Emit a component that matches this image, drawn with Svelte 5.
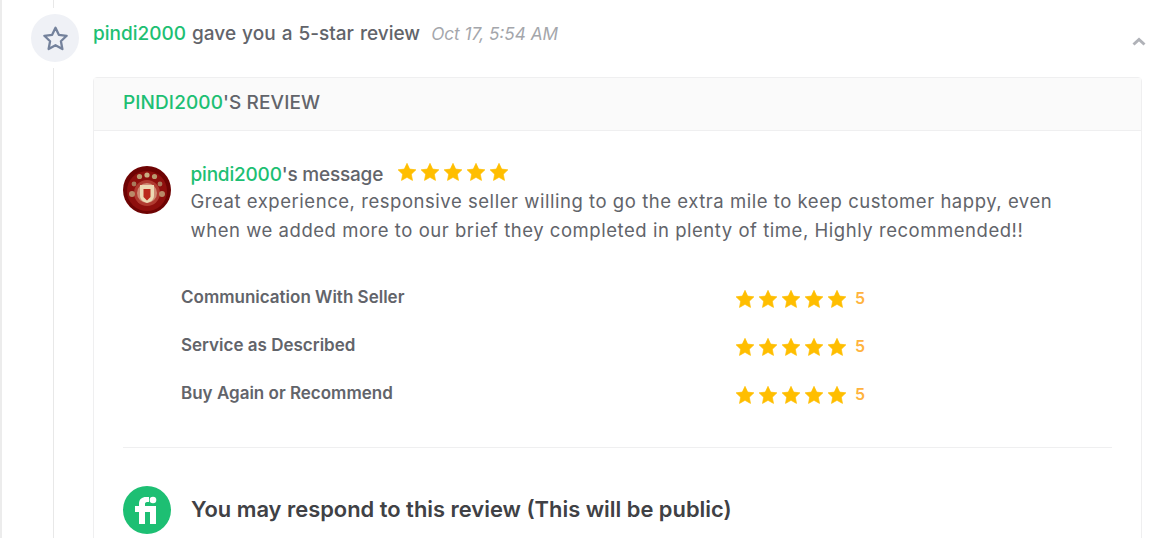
<script>
  const stars = [0, 1, 2, 3, 4];
  const ratings = ['Communication With Seller', 'Service as Described', 'Buy Again or Recommend'];
  const starPath = 'M12 1.6l3.2 6.9 7.5.9-5.5 5.2 1.4 7.5L12 18.4l-6.6 3.7 1.4-7.5L1.300 9.400l7.500-.9z';
</script>

<div class="page">
  <div class="rail">
    <span class="line top"></span>
    <span class="badge">
      <svg width="25" height="25" viewBox="0 0 24 24" fill="none" stroke="#74829c" stroke-width="2.200" stroke-linejoin="round"><path d={starPath} /></svg>
    </span>
    <span class="line rest"></span>
  </div>

  <main class="content">
    <header class="title">
      <h1><span class="green">pindi2000</span> gave you a 5-star review</h1>
      <time>Oct 17, 5:54 AM</time>
      <svg class="chevron" width="14" height="9" viewBox="0 0 14 9" fill="none" stroke="#b0b2b8" stroke-width="3"><path d="M1.500 7.500L7 2.500l5.500 5" /></svg>
    </header>

    <section class="card">
      <div class="card-head"><span class="green">PINDI2000</span>'S REVIEW</div>
      <div class="card-body">
        <div class="message">
          <svg class="avatar" width="48" height="48" viewBox="0 0 48 48">
            <circle cx="24" cy="24" r="24" fill="#6e0303" />
            <circle cx="24" cy="25" r="20" fill="#8e0f0d" />
            <circle cx="24" cy="27" r="13" fill="#b03a30" />
            <circle cx="24" cy="27" r="10" fill="#cf8a74" />
            <circle cx="16.500" cy="10.500" r="2.600" fill="#b99a70" />
            <circle cx="24" cy="9" r="2.600" fill="#c9ad82" />
            <circle cx="31.500" cy="10.500" r="2.600" fill="#b99a70" />
            <circle cx="9" cy="28" r="3" fill="#b98a68" />
            <circle cx="39" cy="28" r="3" fill="#b98a68" />
            <circle cx="11" cy="18" r="2.400" fill="#a87a5c" />
            <circle cx="37" cy="18" r="2.400" fill="#a87a5c" />
            <path d="M17 19h14v11q0 5-7 7q-7-2-7-7z" fill="#ecd9b4" />
            <path d="M20.500 23h7v8l-3.500 3.500-3.500-3.500z" fill="#bb2a1c" />
          </svg>
          <div class="text">
            <div class="msg-head">
              <span class="who"><span class="green">pindi2000</span>'s message</span>
              <span class="stars small">
                {#each stars as s (s)}
                  <svg width="20" height="20" viewBox="0 0 24 24" fill="#ffbe00" stroke="#ffbe00" stroke-width="0.800" stroke-linejoin="round"><path d={starPath} /></svg>
                {/each}
              </span>
            </div>
            <p>Great experience, responsive seller willing to go the extra mile to keep customer happy, even when we added more to our brief they completed in plenty of time, Highly recommended!!</p>
          </div>
        </div>

        <ul class="ratings">
          {#each ratings as r (r)}
            <li>
              <span class="label">{r}</span>
              <span class="score">
                <span class="stars">
                  {#each stars as s (s)}
                    <svg width="20" height="20" viewBox="0 0 24 24" fill="#ffbe00" stroke="#ffbe00" stroke-width="0.800" stroke-linejoin="round"><path d={starPath} /></svg>
                  {/each}
                </span>
                <b>5</b>
              </span>
            </li>
          {/each}
        </ul>

        <hr />

        <div class="respond">
          <span class="logo">
            <svg width="48" height="48" viewBox="0 0 48 48">
              <circle cx="24" cy="24" r="24" fill="#1dbf73" />
              <path d="M16 38V26h-4v-6h4v-2c0-5 3-7 7-7h3v5h-2c-1.500 0-2 1-2 2v2h11v18h-6V26h-5v12z" fill="#fff" />
              <circle cx="30" cy="14" r="3.300" fill="#fff" />
            </svg>
          </span>
          <h2>You may respond to this review (This will be public)</h2>
        </div>
      </div>
    </section>
  </main>
</div>

<style>
  :global(body) {
    margin: 0;
    background: #fff;
  }

  .page {
    box-sizing: border-box;
    height: 538px;
    overflow: hidden;
    display: flex;
    gap: 14px;
    padding-left: 29px;
    border-left: 2px solid #ececec;
    font-family: Inter, "Liberation Sans", sans-serif;
    color: #62646a;
  }

  .rail {
    flex: none;
    width: 48px;
    display: flex;
    flex-direction: column;
    gap: 6px;
  }

  .line {
    width: 1px;
    margin-left: 22px;
    background: #e8e8e8;
  }

  .top {
    height: 8px;
  }

  .rest {
    flex: 1;
  }

  .badge {
    width: 48px;
    height: 48px;
    border-radius: 50%;
    background: #eff1f6;
    display: flex;
    align-items: center;
    justify-content: center;
  }

  .content {
    flex: none;
    width: 1049px;
  }

  .title {
    position: relative;
    height: 77px;
    display: flex;
    align-items: baseline;
    gap: 11px;
    padding-top: 21px;
    box-sizing: border-box;
  }

  h1 {
    margin: 0;
    font-size: 19px;
    line-height: 26px;
    font-weight: 500;
    word-spacing: 1px;
  }

  .green {
    color: #1dbf73;
  }

  time {
    font-size: 17.200px;
    font-style: italic;
    color: #a4a6ab;
  }

  .chevron {
    position: absolute;
    right: -4px;
    top: 37px;
  }

  .card {
    border: 1px solid #efeff0;
    border-radius: 4px;
  }

  .card-head {
    height: 53px;
    box-sizing: border-box;
    padding: 12px 29px 0;
    background: #fafafa;
    border-bottom: 1px solid #efeff0;
    font-size: 19px;
    font-weight: 500;
    line-height: 26px;
    letter-spacing: 0.100px;
  }

  .card-body {
    padding: 35px 29px 60px;
  }

  .message {
    display: flex;
    gap: 19.500px;
  }

  .avatar {
    flex: none;
  }

  .text {
    width: 870px;
    margin-top: -4px;
  }

  .msg-head {
    display: flex;
    align-items: center;
    gap: 15px;
    height: 25px;
  }

  .who {
    font-size: 19px;
    font-weight: 500;
    letter-spacing: -0.2px;
    line-height: 24px;
  }

  .stars {
    display: flex;
    gap: 3px;
  }

  .small {
    margin-top: -5px;
    margin-left: -1px;
  }

  p {
    margin: 0;
    font-size: 18.500px;
    line-height: 29px;
    letter-spacing: 0.540px;
  }

  .ratings {
    list-style: none;
    margin: 40px 0 0;
    padding: 0 0 0 58px;
  }

  .ratings li {
    height: 48px;
    display: flex;
    align-items: flex-start;
  }

  .label {
    width: 554px;
    font-size: 17px;
    font-weight: 600;
    line-height: 24px;
  }

  .score {
    display: flex;
    align-items: center;
    gap: 8px;
    height: 24px;
    margin-top: 2px;
  }

  .score b {
    font-size: 16px;
    font-weight: 600;
    line-height: 22px;
    margin-top: -2px;
    color: #ffb33e;
  }

  hr {
    margin: 18px 0 0;
    border: 0;
    border-top: 1px solid #efeff0;
  }

  .respond {
    display: flex;
    align-items: center;
    gap: 20px;
    margin-top: 38px;
  }

  .logo {
    display: flex;
    flex: none;
  }

  h2 {
    margin: -2px 0 0;
    font-size: 21.900px;
    font-weight: 600;
    color: #404145;
  }
</style>
